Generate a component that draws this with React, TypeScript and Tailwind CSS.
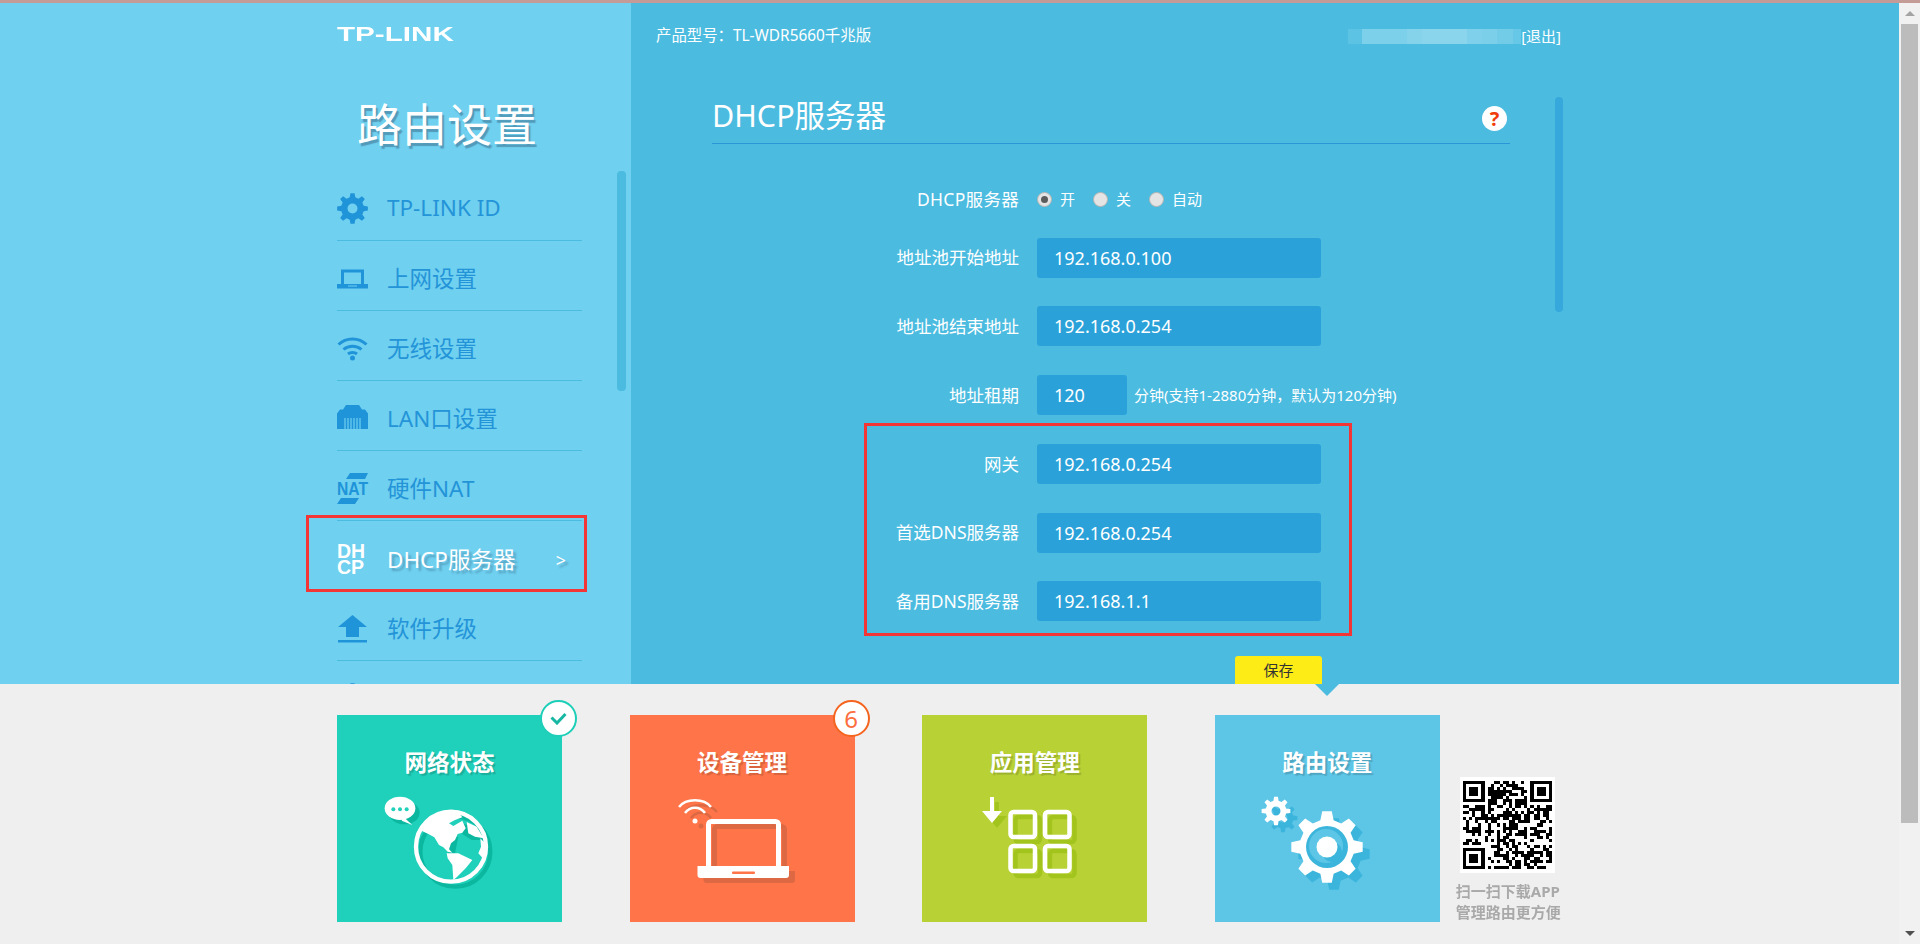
import React from 'react'

const gearPath = (cx: number, cy: number, ro: number, ri: number, n: number) => {
  const step = (Math.PI * 2) / n
  const pts: string[] = []
  for (let i = 0; i < n; i++) {
    const a = i * step - Math.PI / 2
    const p = [
      [ri, a - step * 0.31],
      [ro, a - step * 0.17],
      [ro, a + step * 0.17],
      [ri, a + step * 0.31],
    ]
    p.forEach(([r, t]) => pts.push(`${(cx + r * Math.cos(t)).toFixed(2)} ${(cy + r * Math.sin(t)).toFixed(2)}`))
  }
  return `M${pts.join('L')}Z`
}

// sidebar icons
const GearIcon = () => (
  <svg width="31" height="31" viewBox="0 0 31 31" fill="#2094d9">
    <path fillRule="evenodd" d={`${gearPath(15.5, 15.5, 15.5, 11.5, 8)}M15.5 10.5a5 5 0 1 0 0 10a5 5 0 1 0 0-10Z`} />
  </svg>
)

const LaptopIcon = () => (
  <svg width="31" height="31" viewBox="0 0 31 31" fill="#2094d9">
    <path fillRule="evenodd" d="M4 6.500h23V22H4ZM7 9.500V21h17V9.500Z" />
    <path fillRule="evenodd" d="M0 21h31v4.500H0ZM11 22.500v1h9v-1Z" />
  </svg>
)

const WifiIcon = () => (
  <svg width="31" height="31" viewBox="0 0 31 31" fill="none" stroke="#2094d9" strokeWidth="3">
    <path d="M1.500 11.500C9 4 22 4 29.500 11.500" />
    <path d="M6.500 16.500C11.500 12 19.500 12 24.500 16.500" />
    <path d="M11 21c2.500-2 6.500-2 9 0" />
    <circle cx="15.500" cy="25" r="2.500" fill="#2094d9" stroke="none" />
  </svg>
)

const LanIcon = () => (
  <svg width="31" height="31" viewBox="0 0 31 31" fill="#2094d9">
    <path d="M9 2h13l3 4.500h3l3 4V26H0V10.500l3-4h3Z" />
    <path stroke="#6fd0f0" strokeWidth="1.200" d="M8 15v11M11 15v11M14 15v11M17 15v11M20 15v11M23 15v11" />
  </svg>
)

const NatIcon = () => (
  <svg width="31" height="31" viewBox="0 0 31 31" fill="#2094d9" className="overflow-visible">
    <path d="M13 0h18l-3 6H9ZM4 25h18l-4 6H0Z" />
    <text x="0" y="22" fontSize="19" fontWeight="700" textLength="31" lengthAdjust="spacingAndGlyphs" fontFamily="'Liberation Sans', sans-serif">
      NAT
    </text>
  </svg>
)

const DhcpIcon = () => (
  <span className="block pt-[1px] text-[19.5px] leading-[16px] font-bold text-white [font-family:'Liberation_Sans',sans-serif] [text-shadow:none]">
    <span className="block">DH</span>
    <span className="block">CP</span>
  </span>
)

const UploadIcon = () => (
  <svg width="31" height="31" viewBox="0 0 31 31" fill="#2094d9">
    <path d="M15.500 2L30 14h-8v10H9V14H1Z" />
    <rect x="1" y="27" width="29" height="2.500" />
  </svg>
)

const navItems = [
  { label: 'TP-LINK ID', icon: <GearIcon />, textClass: '' },
  { label: '上网设置', icon: <LaptopIcon />, textClass: 'mt-[2px]' },
  { label: '无线设置', icon: <WifiIcon />, textClass: 'mt-[2px]' },
  { label: 'LAN口设置', icon: <LanIcon />, textClass: 'mt-[2px]' },
  { label: '硬件NAT', icon: <NatIcon />, textClass: 'mt-[2px]' },
  { label: 'DHCP服务器', icon: <DhcpIcon />, textClass: 'mt-[4px]', active: true },
  { label: '软件升级', icon: <UploadIcon />, textClass: 'mt-[2px]' },
]

// card artwork: shadow layer first, white layer on top
const GlobeArt = () => (
  <svg width="130" height="110" viewBox="0 0 390 330">
    <g fill="#0cb7a0">
      <circle cx="241" cy="185" r="105" fill="none" stroke="#0cb7a0" strokeWidth="13" />
      <path d="M258 100L318 118L326 150L290 150L262 132Z" />
      <path d="M205 150L250 140L240 190L222 192Z" />
      <ellipse cx="88" cy="68" rx="46" ry="35" />
    </g>
    <g fill="#ffffff">
      <circle cx="228" cy="170" r="105" fill="none" stroke="#ffffff" strokeWidth="13" />
      <path d="M130 118L165 82L210 68L250 68L262 82L240 90L222 100L235 108L262 92L272 115L262 128L248 132L240 150L228 160L222 178L232 188L218 185L205 172L192 165L178 142L160 132Z" />
      <path d="M275 96L305 110L326 145L300 140L280 130Z" />
      <path d="M316 145L334 165L326 208L310 190L318 170Z" />
      <path d="M215 190L250 190L292 210L272 235L245 262L235 270L232 225L218 205Z" />
      <ellipse cx="75" cy="55" rx="46" ry="35" />
      <path d="M85 80L112 105L80 92Z" />
    </g>
    <circle cx="55" cy="58" r="6" fill="#1fd0ba" />
    <circle cx="75" cy="58" r="6" fill="#1fd0ba" />
    <circle cx="95" cy="58" r="6" fill="#1fd0ba" />
  </svg>
)

const LaptopShape = ({ c, notch }: { c: string; notch: string }) => (
  <g>
    <rect x="40.500" y="31.500" width="70" height="47" rx="3" fill="none" stroke={c} strokeWidth="5" />
    <path d="M29.500 76H121V85a3 3 0 0 1-3 3H32.500a3 3 0 0 1-3-3Z" fill={c} />
    <rect x="64" y="81.500" width="23" height="2.500" rx="1" fill={notch} />
    <g fill="none" stroke={c} strokeWidth="2.500">
      <path d="M11 17C18 8 36 8 43 17" />
      <path d="M17 23C22 16 32 16 37 23" />
    </g>
    <circle cx="27" cy="31" r="2.500" fill={c} />
  </g>
)

const AppsShape = ({ c }: { c: string }) => (
  <g>
    <path d="M15 7h4v14h8L17 33L7 21h8Z" fill={c} />
    <g fill="none" stroke={c} strokeWidth="4.500">
      <rect x="35.500" y="22" width="24.500" height="25" rx="3" />
      <rect x="70" y="22" width="24.500" height="25" rx="3" />
      <rect x="35.500" y="56" width="24.500" height="25" rx="3" />
      <rect x="70" y="56" width="24.500" height="25" rx="3" />
    </g>
  </g>
)

const GearsShape = ({ c }: { c: string }) => (
  <g fill={c}>
    <path fillRule="evenodd" d={`${gearPath(21, 21, 14.5, 10.500, 8)}M21 16.500a4.500 4.500 0 1 0 0 9a4.500 4.500 0 1 0 0-9Z`} />
    <path d={gearPath(72, 57, 36, 27.500, 8)} />
  </g>
)

const LaptopArt = () => (
  <svg width="130" height="100" viewBox="0 0 130 100">
    <g transform="translate(6 5)">
      <LaptopShape c="#dc6943" notch="#dc6943" />
    </g>
    <LaptopShape c="#ffffff" notch="#ff7549" />
  </svg>
)

const AppsArt = () => (
  <svg width="130" height="100" viewBox="0 0 130 100">
    <g transform="translate(5 5)">
      <AppsShape c="#a2c41d" />
    </g>
    <AppsShape c="#ffffff" />
  </svg>
)

const GearsArt = () => (
  <svg width="130" height="110" viewBox="0 0 130 110">
    <g transform="translate(7 7)">
      <GearsShape c="#3cb5dc" />
    </g>
    <GearsShape c="#ffffff" />
    <circle cx="72" cy="57" r="21" fill="#3cb5dc" />
    <circle cx="71" cy="56" r="17" fill="#5dc5e6" />
    <circle cx="77" cy="62" r="10" fill="#3cb5dc" />
    <circle cx="72" cy="57" r="10.500" fill="#ffffff" />
  </svg>
)

const QR_SIZE = 29

const inFinder = (x: number, y: number) =>
  (x < 8 && y < 8) || (x > QR_SIZE - 9 && y < 8) || (x < 8 && y > QR_SIZE - 9)

const qrModules = (() => {
  const cells: [number, number][] = []
  let seed = 20771
  for (let y = 0; y < QR_SIZE; y++) {
    for (let x = 0; x < QR_SIZE; x++) {
      seed = (seed * 1103515245 + 12345) & 0x7fffffff
      if (!inFinder(x, y) && (seed >> 16) % 100 < 52) cells.push([x, y])
    }
  }
  return cells
})()

const QrCode = () => (
  <svg width="95" height="96" viewBox="-1 -1 31 31" className="bg-white" shapeRendering="crispEdges">
    {qrModules.map(([x, y]) => (
      <rect key={`${x}-${y}`} x={x} y={y} width="1" height="1" fill="#000" />
    ))}
    {[
      [0, 0],
      [22, 0],
      [0, 22],
    ].map(([x, y]) => (
      <g key={`${x}-${y}`}>
        <rect x={x + 0.5} y={y + 0.5} width="6" height="6" fill="none" stroke="#000" />
        <rect x={x + 2} y={y + 2} width="3" height="3" fill="#000" />
      </g>
    ))}
  </svg>
)

const cards = [
  { title: '网络状态', bg: 'bg-[#1fd0ba]', art: <GlobeArt />, artClass: 'ml-[38px]' },
  { title: '设备管理', bg: 'bg-[#ff7549]', art: <LaptopArt />, artClass: 'ml-[38px]' },
  { title: '应用管理', bg: 'bg-[#b8d236]', art: <AppsArt />, artClass: 'ml-[53px]' },
  { title: '路由设置', bg: 'bg-[#5dc5e6]', art: <GearsArt />, artClass: 'ml-[40px]' },
]

const fields = [
  { label: '地址池开始地址', value: '192.168.0.100' },
  { label: '地址池结束地址', value: '192.168.0.254' },
  { label: '地址租期', value: '120', short: true, hint: '分钟(支持1-2880分钟，默认为120分钟)' },
  { label: '网关', value: '192.168.0.254' },
  { label: '首选DNS服务器', value: '192.168.0.254' },
  { label: '备用DNS服务器', value: '192.168.1.1' },
]

const radios = [
  { label: '开', checked: true },
  { label: '关' },
  { label: '自动' },
]

const mosaic = [
  'w-[14px] bg-[#5cc3e4]',
  'w-[45px] bg-[#7dd0ea]',
  'w-[15px] bg-[#85d2eb]',
  'w-[45px] bg-[#8bd5ec]',
  'w-[15px] bg-[#7fd0ea]',
  'w-[15px] bg-[#7ccfe9]',
  'w-[16px] bg-[#72cbe7]',
  'w-[8px] bg-[#66c7e6]',
]

const App = () => {
  return (
    <div className="relative flex h-[944px] w-full flex-col overflow-hidden bg-[#efefef] [font-family:'Noto_Sans','Noto_Sans_CJK_SC',sans-serif]">
      <div className="h-[3px] bg-[#c49b97]" />

      <div className="flex min-h-0 flex-1">
        <div className="flex min-w-0 flex-1 flex-col">
          <div className="flex h-[681px] bg-[#4bbbe0]">
            {/* Sidebar */}
            <aside className="relative h-full w-[631px] shrink-0 overflow-hidden bg-[#6fd0f0] pl-[337px]">
              <div className="mt-[23px] h-[16px] w-fit origin-left scale-x-[1.41] text-[21px] leading-[16px] font-bold text-white [font-family:'Liberation_Sans',sans-serif]">
                TP-LINK
              </div>
              <h1 className="mt-[53px] h-[60px] pl-[20px] text-[45px] leading-[60px] font-normal text-white [text-shadow:2px_3px_1px_rgba(60,110,140,0.55)]">
                路由设置
              </h1>
              <nav className="mt-[16px] w-[245px]">
                {navItems.map(item => (
                  <div
                    key={item.label}
                    className={`flex h-[70px] items-center border-b border-[#4bbbe0] pt-[5px] ${
                      item.active ? 'text-white [text-shadow:3px_3px_2px_rgba(60,110,140,0.45)]' : 'text-[#2494d8]'
                    }`}
                  >
                    <span className="mr-[19px] w-[31px]">{item.icon}</span>
                    <span className={`text-[22.5px] leading-[30px] ${item.textClass}`}>{item.label}</span>
                    {item.active && <span className="mt-[4px] mr-[16px] ml-auto text-[18px]">&gt;</span>}
                  </div>
                ))}
                <div className="pt-[22px]">
                  <GearIcon />
                </div>
              </nav>
              <div className="absolute top-[168px] left-[617px] h-[220px] w-[9px] rounded-[4px] bg-[#4bbbe0]" />
            </aside>

            {/* Main panel */}
            <main className="relative z-10 min-w-0 flex-1 text-white">
              <header className="flex w-[930px] items-center justify-between pt-[23px] pl-[25px] text-[15.4px] leading-[20px]">
                <span>产品型号：TL-WDR5660千兆版</span>
                <div className="flex items-center">
                  <div className="flex h-[15px]">
                    {mosaic.map((cls, i) => (
                      <div key={i} className={cls} />
                    ))}
                  </div>
                  <span className="text-[15px]">[退出]</span>
                </div>
              </header>

              <div className="mt-[49px] ml-[81px] flex h-[49px] w-[798px] justify-between border-b border-[#2a96d8] pr-[3px]">
                <h2 className="text-[30.5px] leading-[40px] font-normal">DHCP服务器</h2>
                <span className="mt-[11px] flex h-[25px] w-[25px] items-center justify-center rounded-full bg-white text-[20px] font-bold text-[#f03c0a]">
                  ?
                </span>
              </div>

              <form className="mt-[35px] ml-[82px]">
                <div className="mb-[18.5px] flex h-10 items-center gap-[18px]">
                  <label className="w-[306px] text-right text-[17.5px] tracking-[0.3px]">DHCP服务器</label>
                  <div className="flex items-center gap-[18px]">
                    {radios.map(r => (
                      <div key={r.label} className="flex items-center gap-[8px] text-[15px]">
                        <span className="flex h-[15px] w-[15px] items-center justify-center rounded-full border border-[#b4b4b4] bg-[#e4e4e4]">
                          {r.checked && <span className="h-[7px] w-[7px] rounded-full bg-[#5c5c5c]" />}
                        </span>
                        {r.label}
                      </div>
                    ))}
                  </div>
                </div>

                <div className="flex flex-col gap-[28.78px]">
                  {fields.map(f => (
                    <div key={f.label} className="flex h-10 items-center gap-[18px]">
                      <label className="w-[306px] text-right text-[17.5px]">{f.label}</label>
                      <input
                        readOnly
                        value={f.value}
                        className={`h-10 rounded-[3px] bg-[#2aa2d9] pl-[17px] text-[18px] text-white outline-none ${
                          f.short ? 'w-[90px]' : 'w-[284px]'
                        }`}
                      />
                      {f.hint && <span className="-ml-[11px] text-[15px]">{f.hint}</span>}
                    </div>
                  ))}
                </div>
              </form>

              <div className="relative mt-[35px] ml-[604px] flex h-[28px] w-[87px] items-center justify-center rounded-t-[3px] bg-[#fdec16] text-[15px] text-[#333]">
                保存
                <span className="absolute top-full left-[80px] h-0 w-0 border-t-[12px] border-r-[12px] border-l-[12px] border-t-[#4bbbe0] border-r-transparent border-l-transparent" />
              </div>

              <div className="absolute top-[94px] left-[924px] h-[215px] w-2 rounded-[4px] bg-[#36a8dc]" />
            </main>
          </div>

          {/* Bottom tiles */}
          <div className="flex flex-1 pt-[31px] pl-[337px]">
            <div className="flex gap-[67.6px]">
              {cards.map((card, i) => (
                <div key={card.title} className={`relative h-[207px] w-[225px] ${card.bg}`}>
                  <div className="pt-[33px] text-center text-[22.5px] leading-[30px] font-bold text-white [text-shadow:2px_2px_1px_rgba(0,0,0,0.16)]">
                    {card.title}
                  </div>
                  <div className={`mt-[12px] ${card.artClass}`}>{card.art}</div>
                  {i === 0 && (
                    <span className="absolute -top-[15px] -right-[15px] flex h-[37px] w-[37px] items-center justify-center rounded-full border-2 border-[#1dcfb8] bg-white">
                      <svg width="17" height="13" viewBox="0 0 17 13" fill="none" stroke="#17b7a3" strokeWidth="3">
                        <path d="M1.500 5.500L7 11L15.500 2" />
                      </svg>
                    </span>
                  )}
                  {i === 1 && (
                    <span className="absolute -top-[15px] -right-[15px] flex h-[37px] w-[37px] items-center justify-center rounded-full border-2 border-[#f5641f] bg-white text-[24px] leading-none text-[#fd6f3f]">
                      6
                    </span>
                  )}
                </div>
              ))}
            </div>
            <div className="ml-[16px] w-[105px] pt-[62px]">
              <div className="ml-[4px]">
                <QrCode />
              </div>
              <div className="mt-2 text-[15px] leading-[21px] font-bold whitespace-nowrap text-[#a9a9a9] blur-[0.5px]">
                <div>扫一扫下载APP</div>
                <div>管理路由更方便</div>
              </div>
            </div>
          </div>
        </div>

        {/* Browser scrollbar */}
        <div className="flex w-[21px] shrink-0 flex-col bg-[#f1f1f1]">
          <div className="flex h-[21px] items-center justify-center">
            <span className="h-0 w-0 border-r-[5px] border-b-[5px] border-l-[5px] border-r-transparent border-b-[#a3a3a3] border-l-transparent" />
          </div>
          <div className="mx-[2px] h-[799px] bg-[#bcbcbc]" />
          <div className="mt-auto flex h-[21px] items-center justify-center">
            <span className="h-0 w-0 border-t-[5px] border-r-[5px] border-l-[5px] border-t-[#505050] border-r-transparent border-l-transparent" />
          </div>
        </div>
      </div>

      {/* Red annotation boxes */}
      <div className="pointer-events-none absolute top-[515px] left-[306px] z-20 h-[77px] w-[281px] border-[3px] border-[#f33535]" />
      <div className="pointer-events-none absolute top-[423px] left-[864px] z-20 h-[213px] w-[488px] border-[3px] border-[#f33535]" />
    </div>
  )
}

export default App
